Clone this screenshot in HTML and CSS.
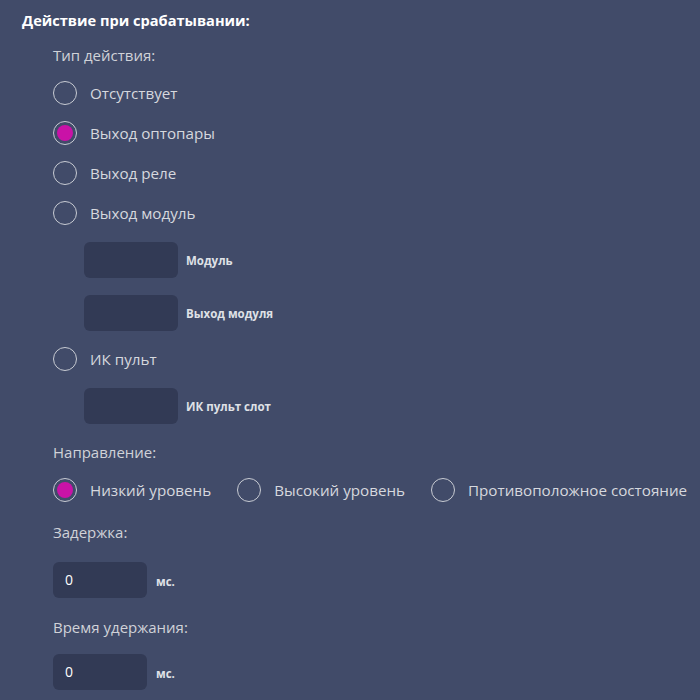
FILE: index.html
```html
<!DOCTYPE html>
<html lang="ru">
<head>
<meta charset="utf-8">
<link rel="stylesheet" href="styles.css">
</head>
<body>
<div class="panel">
  <div class="title">Действие при срабатывании:</div>
  <div class="group">
    <div class="label">Тип действия:</div>
    <div class="radios">
      <div class="radio-row"><span class="radio"></span><span class="rtext">Отсутствует</span></div>
      <div class="radio-row"><span class="radio checked"></span><span class="rtext">Выход оптопары</span></div>
      <div class="radio-row"><span class="radio"></span><span class="rtext">Выход реле</span></div>
      <div class="radio-row"><span class="radio"></span><span class="rtext">Выход модуль</span></div>
    </div>
    <div class="fields">
      <div class="field"><div class="box"></div><span class="flabel">Модуль</span></div>
      <div class="field"><div class="box"></div><span class="flabel">Выход модуля</span></div>
    </div>
    <div class="radios">
      <div class="radio-row"><span class="radio"></span><span class="rtext">ИК пульт</span></div>
    </div>
    <div class="fields">
      <div class="field"><div class="box"></div><span class="flabel">ИК пульт слот</span></div>
    </div>

    <div class="label sect">Направление:</div>
    <div class="radios inline">
      <div class="radio-row"><span class="radio checked"></span><span class="rtext">Низкий уровень</span></div>
      <div class="radio-row"><span class="radio"></span><span class="rtext">Высокий уровень</span></div>
      <div class="radio-row"><span class="radio"></span><span class="rtext">Противоположное состояние</span></div>
    </div>

    <div class="label sect2">Задержка:</div>
    <div class="num-field first"><div class="nbox">0</div><span class="flabel">мс.</span></div>

    <div class="label sect3">Время удержания:</div>
    <div class="num-field second"><div class="nbox">0</div><span class="flabel">мс.</span></div>
  </div>
</div>
</body>
</html>
```

FILE: styles.css
```css
html, body {
  margin: 0;
  padding: 0;
  background: #414b69;
  height: 100%;
}
body {
  font-family: "Open Sans", "Noto Sans", sans-serif;
  color: #d2d4da;
}
.panel {
  padding: 10px 0 0 22px;
}
.title {
  font-size: 14.6px;
  font-weight: 700;
  line-height: 20px;
  color: #ffffff;
}
.group {
  padding-left: 31px;
  padding-top: 15px;
}
.label {
  font-size: 15px;
  line-height: 20px;
  color: #d0d2d8;
}
.radios {
  display: flex;
  flex-direction: column;
  margin-top: 8px;
}
.radios.inline {
  flex-direction: row;
}
.radios.inline .radio-row {
  margin-right: 26px;
  flex: none;
}
.radio-row {
  display: flex;
  align-items: center;
  height: 40px;
  white-space: nowrap;
}
.radio {
  box-sizing: border-box;
  width: 24px;
  height: 24px;
  border: 1.5px solid #c8cbd3;
  border-radius: 50%;
  display: flex;
  align-items: center;
  justify-content: center;
  flex: none;
}
.radio.checked::after {
  content: "";
  width: 16px;
  height: 16px;
  border-radius: 50%;
  background: #c912a7;
}
.rtext {
  margin-left: 13px;
  font-size: 15.2px;
  color: #d6d8de;
}
.fields {
  display: flex;
  flex-direction: column;
  gap: 17px;
  margin-top: 9px;
  margin-bottom: 8px;
  padding-left: 31px;
}
.field, .num-field {
  display: flex;
  align-items: center;
}
.box, .nbox {
  width: 94px;
  height: 36px;
  border-radius: 6px;
  background: #323a55;
  flex: none;
}
.nbox {
  box-sizing: border-box;
  padding-left: 12px;
  font-size: 14px;
  line-height: 36px;
  color: #ffffff;
}
.flabel {
  margin-left: 8px;
  font-size: 11.5px;
  font-weight: 700;
  color: #dfe1e6;
}
.num-field .flabel {
  margin-left: 9px;
  margin-top: 2px;
}
.sect { margin-top: 18px; }
.sect2 { margin-top: 12px; }
.num-field.first { margin-top: 20px; }
.sect3 { margin-top: 19px; }
.num-field.second { margin-top: 17px; }
```
